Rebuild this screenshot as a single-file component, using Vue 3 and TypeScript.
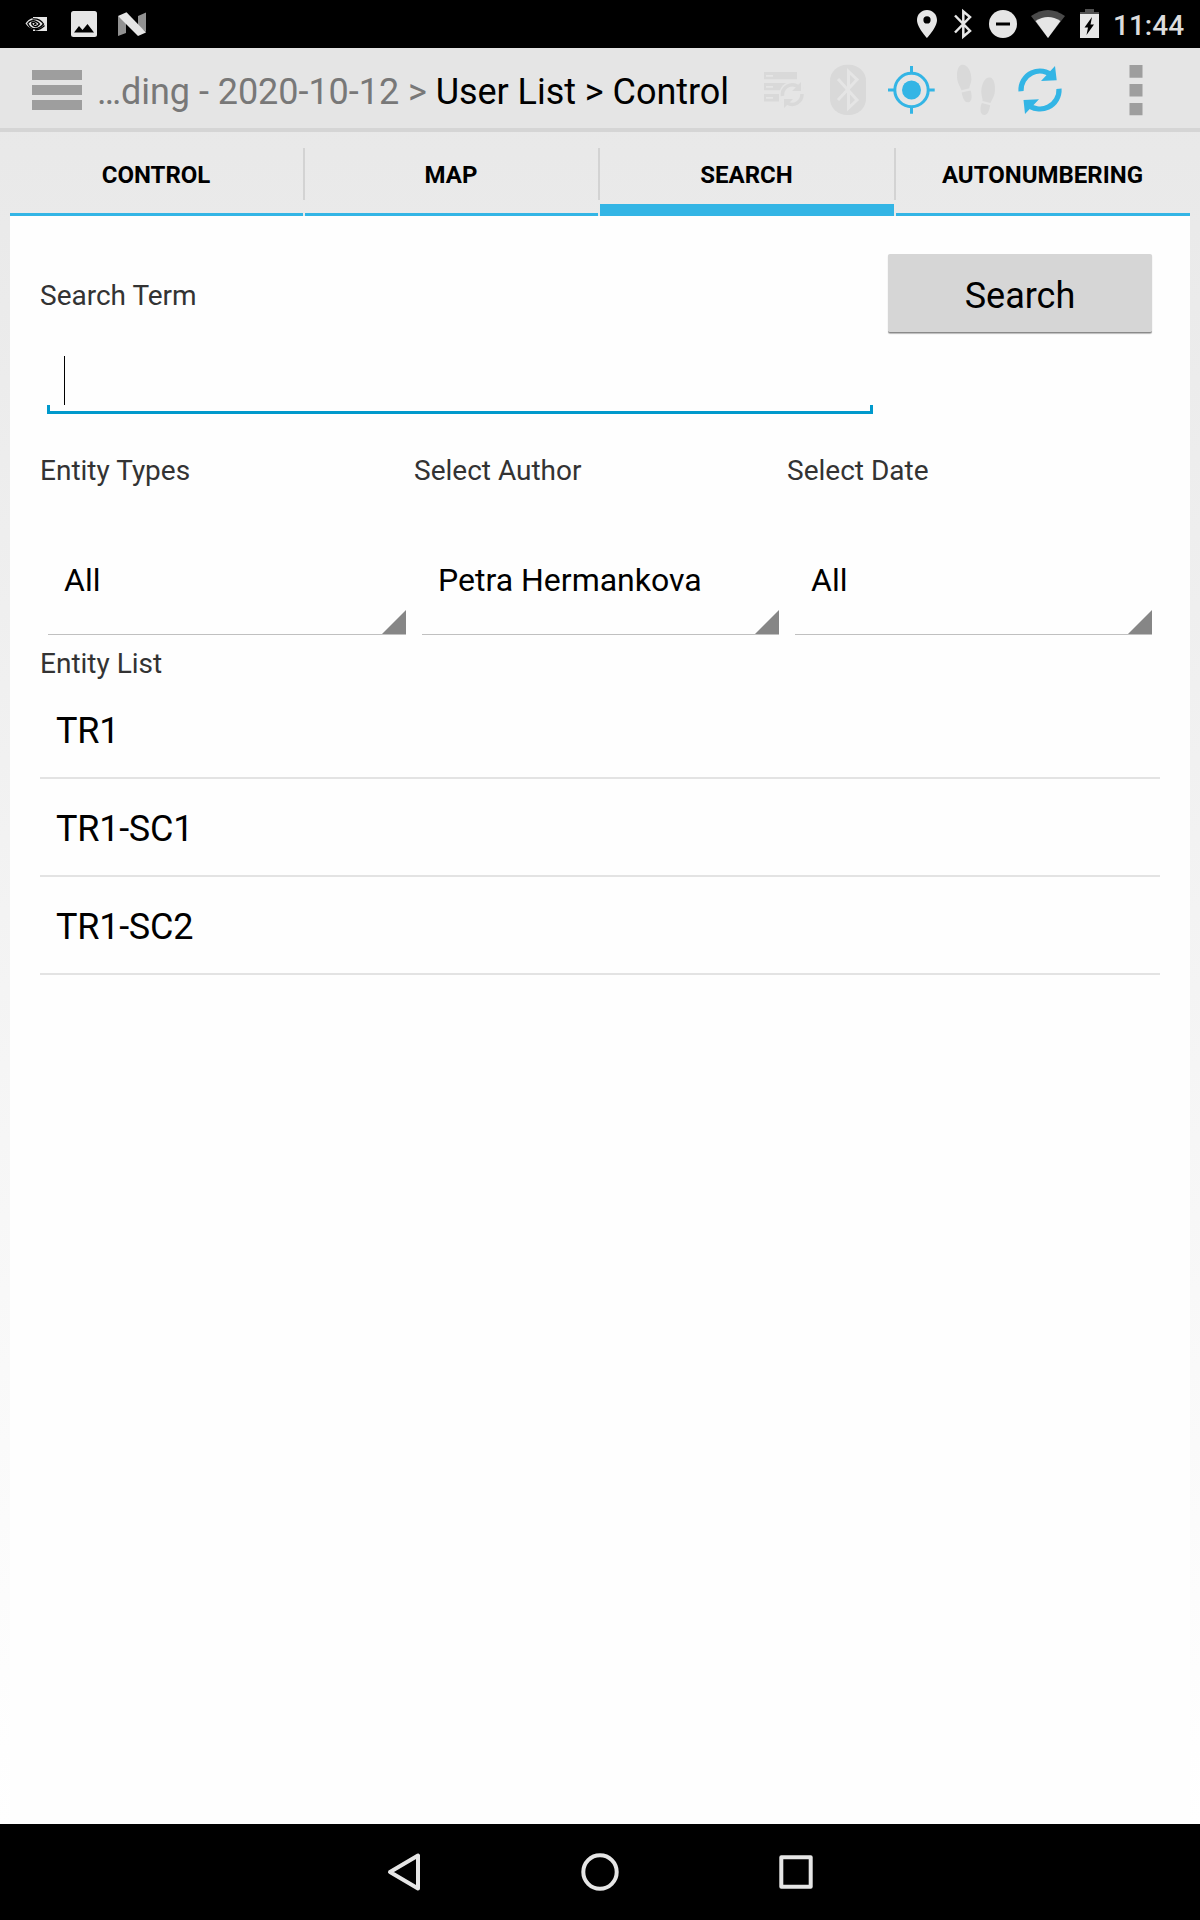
<script setup lang="ts">
import { ref } from 'vue'

interface Filter {
  label: string
  value: string
}

const tabs: string[] = ['Control', 'Map', 'Search', 'Autonumbering']
const activeTab = ref('Search')

const filters: Filter[] = [
  { label: 'Entity Types', value: 'All' },
  { label: 'Select Author', value: 'Petra Hermankova' },
  { label: 'Select Date', value: 'All' },
]

const entities: string[] = ['TR1', 'TR1-SC1', 'TR1-SC2']
</script>

<template>
  <div class="screen">
    <div class="status">
      <svg class="status-left" width="160" height="48" viewBox="0 0 160 48">
        <path d="M33 17H47V31H33V29C29 28 27 25.500 25.500 23.500C27 21 30 18.500 33 18Z" fill="#e6e6e6" />
        <g fill="none" stroke="#000" stroke-width="1.300">
          <path d="M32.500 19C38 18.500 41.500 21 43.500 24C41 27 37 29.500 32.500 28.500C30 27.500 28.500 25.500 27.800 23.500C29.500 21 33 20 36 21.300C38 22.200 39 23 39.500 24C37.500 26.500 35 27 33.500 26C32 25 31.500 23.500 32 22.500C34 22 35.500 23 36 24L34 24.500" />
          <path d="M35 30Q41 29.500 44.500 25.500" />
        </g>
        <rect x="71" y="11" width="26" height="26" rx="2.500" fill="#e6e6e6" />
        <path d="M74 32.500L79 26L82.500 30L87.500 24L94 32.500Z" fill="#000" />
        <path d="M118 16L126 22V33L118 36ZM138 16L146 12.500V32L138 26Z" fill="#919191" />
        <path d="M118 16L126.500 12.300L146 32.500L138 36Z" fill="#e6e6e6" />
      </svg>
      <svg width="208" height="48" viewBox="900 0 208 48">
        <path d="M927 10C921.400 10 917 14.400 917 20C917 27.500 927 38 927 38S937 27.500 937 20C937 14.400 932.600 10 927 10ZM927 16.300A3.600 3.600 0 1 1 927 23.500A3.600 3.600 0 0 1 927 16.300Z" fill="#e6e6e6" fill-rule="evenodd" />
        <path d="M955 15.500L970 31L963.300 36.500V11.500L970 17L955 32.500" fill="none" stroke="#e6e6e6" stroke-width="2.500" />
        <circle cx="1003" cy="24" r="14" fill="#e6e6e6" />
        <rect x="996" y="22.500" width="14" height="3" fill="#000" />
        <path d="M1048 38L1031 16Q1048 4 1065 16Z" fill="#4a4a4a" />
        <path d="M1048 38L1035.500 21Q1048 13 1060.500 21Z" fill="#e6e6e6" />
        <path d="M1085 9H1094V12H1099V17H1080V12H1085Z" fill="#505050" />
        <rect x="1080" y="14" width="19" height="24" fill="#e6e6e6" />
        <path d="M1092 17L1084.500 27.500H1088L1086.500 35L1094 24.500H1090.500Z" fill="#000" />
      </svg>
      <span class="clock">11:44</span>
    </div>

    <header class="app-bar">
      <svg class="menu" width="50" height="40" viewBox="0 0 50 40">
        <path d="M0 0H50V10H0ZM0 15H50V25H0ZM0 30H50V40H0Z" fill="#9e9e9e" />
      </svg>
      <div class="crumbs"><span class="past">…ding - 2020-10-12 &gt; </span>User List &gt; Control</div>
      <div class="actions">
        <svg width="64" height="80" viewBox="0 0 64 80">
          <path d="M12 24H45V31.300H12ZM12 35H36V42.300H12ZM12 46H27V53.500H12Z" fill="#d9d9d9" />
          <path d="M14 27H21V28.800H14ZM14 38H21V39.800H14ZM14 49H21V50.800H14Z" fill="#e5e5e5" />
          <circle cx="40.300" cy="46.500" r="13" fill="#e5e5e5" />
          <g fill="none" stroke="#d9d9d9" stroke-width="3.500">
            <path d="M30.500 48A10 10 0 0 1 46 38.500" />
            <path d="M50 46A10 10 0 0 1 35 55" />
          </g>
          <path d="M49 34V43H40ZM32 60V51H41Z" fill="#d9d9d9" />
        </svg>
        <svg width="64" height="80" viewBox="0 0 64 80">
          <rect x="14" y="16.700" width="36" height="50.300" rx="17" ry="16" fill="#d9d9d9" />
          <path d="M22 31L41 52L32.500 60V23.500L41 31.500L22 52" fill="none" stroke="#e5e5e5" stroke-width="3" />
        </svg>
        <svg width="64" height="80" viewBox="0 0 64 80">
          <g fill="none" stroke="#33b5e5" stroke-width="3">
            <circle cx="31.500" cy="42" r="16.700" />
            <path d="M31.500 18V25M31.500 59V65.700M8 42H15M48 42H54.700" />
          </g>
          <circle cx="31.500" cy="42" r="9.500" fill="#33b5e5" />
        </svg>
        <svg width="64" height="80" viewBox="0 0 64 80">
          <g fill="#d9d9d9">
            <path d="M18 16.800C23 16 27.500 23 27.400 31C27.300 36 25 38 25.500 40.300L17.500 42.300C16 38 13 35 13 28C13 21 15 17.300 18 16.800Z" />
            <path d="M17.700 44.500L26.500 42.500C28 46 28.500 53.500 24.500 54.300C20 55 18.500 49 17.700 44.500Z" />
            <path d="M46 29.500C41 28.500 37.500 36 37.300 43C37.200 48 39 50.500 38.500 53L46.500 55C48 51 51 48.500 51 41C51 34 49 30 46 29.500Z" />
            <path d="M37.800 55L46.200 57.200C45.500 61 44 67.500 40 67C35.500 66.500 36 59 37.800 55Z" />
          </g>
        </svg>
        <svg width="64" height="80" viewBox="0 0 64 80">
          <g fill="none" stroke="#33b5e5" stroke-width="5.200">
            <path d="M13 43.300A19 19 0 0 1 45 28.200" />
            <path d="M51 40.700A19 19 0 0 1 19 55.800" />
          </g>
          <path d="M47 18L48.700 32.300L33 33ZM17 66L15.500 52L31 51.300Z" fill="#33b5e5" />
        </svg>
      </div>
      <svg class="overflow" width="14" height="80" viewBox="0 0 14 80">
        <path d="M.5 17H13.500V29.700H.5ZM.5 36H13.500V48.500H.5ZM.5 55H13.500V67.300H.5Z" fill="#9e9e9e" />
      </svg>
    </header>

    <nav class="tabs">
      <template v-for="(tab, i) in tabs" :key="tab">
        <span v-if="i > 0" class="divider"></span>
        <button class="tab" :class="{ active: tab === activeTab }" @click="activeTab = tab">{{ tab }}</button>
      </template>
    </nav>

    <main class="panel">
      <section class="search">
        <div class="term">
          <div class="label">Search Term</div>
          <div class="field"><span class="caret"></span></div>
        </div>
        <button class="submit">Search</button>
      </section>

      <section class="filters">
        <div v-for="filter in filters" :key="filter.label" class="filter">
          <div class="label">{{ filter.label }}</div>
          <div class="spinner">
            <span>{{ filter.value }}</span>
            <svg width="24" height="24" viewBox="0 0 24 24"><path d="M24 0V24H0Z" fill="#868686" /></svg>
          </div>
        </div>
      </section>

      <div class="label list-label">Entity List</div>
      <ul class="list">
        <li v-for="entity in entities" :key="entity">{{ entity }}</li>
      </ul>
    </main>

    <footer class="nav-bar">
      <svg width="440" height="96" viewBox="380 0 440 96" fill="none" stroke="#e6e6e6" stroke-width="4" stroke-linejoin="round">
        <path d="M390 48L418 31.500V64.500Z" />
        <circle cx="600" cy="48" r="16.700" />
        <rect x="781.300" y="33.300" width="29.400" height="29.400" />
      </svg>
    </footer>
  </div>
</template>

<style>
body {
  margin: 0;
}
</style>

<style scoped>
.screen {
  width: 1200px;
  height: 1920px;
  display: flex;
  flex-direction: column;
  overflow: hidden;
  background: linear-gradient(#e7e7e7, #fff 1824px);
  color: #000;
  font-family: Roboto, sans-serif;
}
svg {
  display: block;
  flex: none;
}
button {
  border: 0;
  padding: 0;
  font-family: inherit;
  color: inherit;
}
.status {
  height: 48px;
  display: flex;
  background: #000;
}
.status-left {
  margin-right: auto;
}
.clock {
  width: 87px;
  margin-left: 5px;
  font-size: 28px;
  font-weight: 500;
  line-height: 51px;
  color: #dcdcdc;
}
.app-bar {
  height: 80px;
  display: flex;
  background: #e5e5e5;
  border-bottom: 4px solid #d5d5d5;
}
.menu {
  margin: 22px 15px 0 32px;
}
.crumbs {
  flex: 1;
  white-space: nowrap;
  font-size: 36px;
  letter-spacing: -0.04px;
  line-height: 89px;
}
.past {
  color: #787878;
}
.actions {
  display: flex;
}
.overflow {
  margin: 0 57px;
}
.tabs {
  height: 84px;
  display: grid;
  grid-template-columns: 293px 2px 293px 2px 294px 2px 294px;
  padding: 0 10px;
}
.tab {
  box-sizing: border-box;
  padding: 4px 1px 0 0;
  border-bottom: 3px solid #33b5e5;
  background: none;
  font-size: 24px;
  font-weight: 700;
  text-transform: uppercase;
}
.tab.active {
  padding-top: 13px;
  border-bottom-width: 12px;
}
.divider {
  height: 52px;
  margin-top: 16px;
  background: #d3d3d3;
}
.panel {
  flex: 1;
  margin: 0 10px;
  padding: 32px 30px 0;
  background: #fefefe;
}
.label {
  font-size: 28px;
  line-height: 34px;
  color: #333;
}
.search {
  height: 206px;
  display: flex;
}
.term {
  width: 840px;
  padding-top: 31px;
}
.field {
  width: 826px;
  height: 58px;
  margin: 43px 0 0 7px;
  display: flex;
  background:
    linear-gradient(#09c, #09c) 0 100% / 100% 3px no-repeat,
    linear-gradient(#09c, #09c) 0 100% / 3px 9px no-repeat,
    linear-gradient(#09c, #09c) 100% 100% / 3px 9px no-repeat;
}
.caret {
  width: 1px;
  height: 49px;
  margin-left: 17px;
  background: #000;
}
.submit {
  width: 264px;
  height: 79px;
  margin: 6px 0 0 8px;
  padding-top: 6px;
  box-sizing: border-box;
  border-radius: 2px;
  border-bottom: 1px solid #8a8a8a;
  background: #d6d6d6;
  box-shadow: 0 1px 1px #bbb;
  font-size: 36px;
}
.filters {
  display: grid;
  grid-template-columns: 374px 373px 373px;
}
.spinner {
  height: 85px;
  margin: 61px 8px 0;
  padding-left: 16px;
  display: flex;
  justify-content: space-between;
  align-items: flex-end;
  border-bottom: 1px solid #c0c0c0;
}
.spinner span {
  align-self: flex-start;
  font-size: 32px;
  line-height: 62px;
}
.list-label {
  margin-top: 12px;
}
.list {
  margin: 0;
  padding: 0;
  list-style: none;
}
.list li {
  height: 96px;
  padding-left: 16px;
  border-bottom: 2px solid #e3e3e3;
  font-size: 36px;
  letter-spacing: -0.25px;
  line-height: 101px;
}
.nav-bar {
  height: 96px;
  display: flex;
  justify-content: center;
  background: #000;
}
</style>
